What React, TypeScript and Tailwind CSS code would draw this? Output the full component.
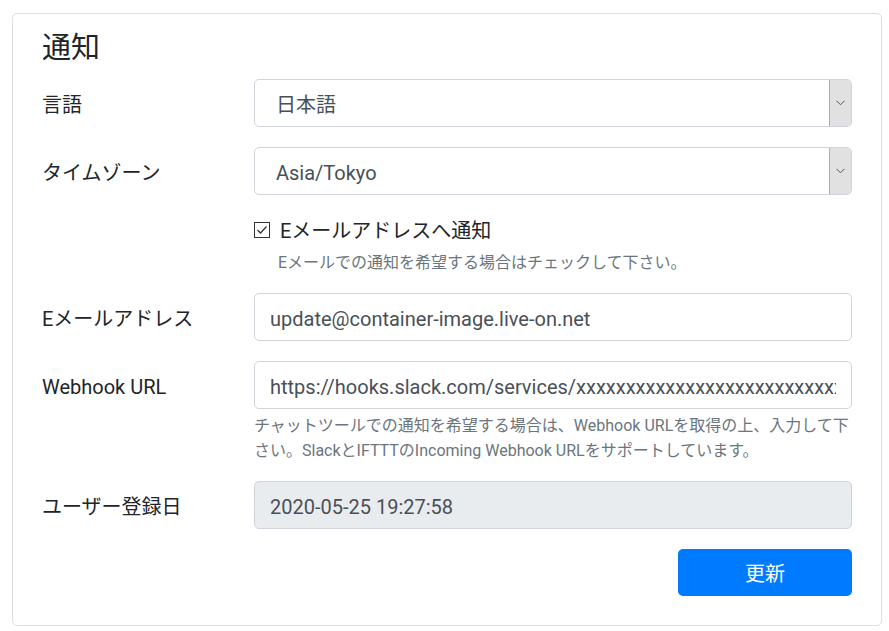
import React from 'react';

const font = { fontFamily: '"Roboto", "Noto Sans CJK JP", sans-serif' };

const Chevron = () => (
  <svg width="9" height="6" viewBox="0 0 9 6" fill="none">
    <path d="M0.5 0.8 L4.5 4.8 L8.5 0.8" stroke="#555" strokeWidth="1" />
  </svg>
);

const FakeSelect = ({ value }: { value: string }) => (
  <div className="flex-1 h-[48px] flex items-stretch border border-[#ced4da] rounded-[5px] bg-white overflow-hidden">
    <div className="flex-1 flex items-center pl-[21px] pt-[3px] text-[20px] text-[#495057]">{value}</div>
    <div className="w-[22px] flex items-center justify-center bg-[#e1e1e1] border-l border-[#adadad] rounded-r-[4px]">
      <Chevron />
    </div>
  </div>
);

const Row = ({ label, children }: { label: string; children: React.ReactNode }) => (
  <div className="flex items-center">
    <div className="w-[212px] pt-[3px] text-[20px] text-[#212529]">{label}</div>
    {children}
  </div>
);

const inputCls =
  'flex-1 min-w-0 h-[48px] px-[15px] pt-[3px] text-[20px] text-[#495057] border border-[#ced4da] rounded-[5px] outline-none';

export default function App() {
  return (
    <div className="bg-white min-h-[631px] pt-[13px] pl-[12px]" style={font}>
      <div className="w-[870px] border border-[#dfdfdf] rounded-[5px] pt-[17px] pb-[29px] px-[29px]">
        <h2 className="text-[29px] leading-[34px] text-[#212529] mb-[14px]">通知</h2>

        <Row label="言語">
          <FakeSelect value="日本語" />
        </Row>

        <div className="mt-[20px]">
          <Row label="タイムゾーン">
            <FakeSelect value="Asia/Tokyo" />
          </Row>
        </div>

        <div className="mt-[20px] pl-[212px]">
          <div className="flex items-center h-[30px]">
            <div className="w-[16px] h-[16px] border border-[#333] bg-white flex items-center justify-center">
              <svg width="12" height="10" viewBox="0 0 12 10" fill="none">
                <path d="M1.5 5 L4.5 8 L10.5 1.5" stroke="#333" strokeWidth="1.3" />
              </svg>
            </div>
            <span className="ml-[10px] pt-[2px] text-[20px] text-[#212529]">Eメールアドレスへ通知</span>
          </div>
          <p className="mt-[7px] pl-[24px] text-[16px] leading-[22px] text-[#6c757d]">
            Eメールでの通知を希望する場合はチェックして下さい。
          </p>
        </div>

        <div className="mt-[19px]">
          <Row label="Eメールアドレス">
            <input className={inputCls} style={font} readOnly value="update@container-image.live-on.net" />
          </Row>
        </div>

        <div className="mt-[20px]">
          <Row label="Webhook URL">
            <input
              className={inputCls}
              style={font}
              readOnly
              value="https://hooks.slack.com/services/xxxxxxxxxxxxxxxxxxxxxxxxxxxxxxxxxxxxxxxxxxxxxxx"
            />
          </Row>
          <p className="ml-[212px] mt-[4px] text-[16px] leading-[25px] text-[#6c757d]">
            チャットツールでの通知を希望する場合は、Webhook URLを取得の上、入力して下さい。SlackとIFTTTのIncoming Webhook URLをサポートしています。
          </p>
        </div>

        <div className="mt-[18px]">
          <Row label="ユーザー登録日">
            <input className={`${inputCls} bg-[#e9ecef]`} style={font} readOnly value="2020-05-25 19:27:58" />
          </Row>
        </div>

        <div className="mt-[20px] flex justify-end">
          <button className="w-[174px] h-[47px] pt-[3px] rounded-[5px] bg-[#007bff] text-white text-[20px]" style={font}>
            更新
          </button>
        </div>
      </div>
    </div>
  );
}
